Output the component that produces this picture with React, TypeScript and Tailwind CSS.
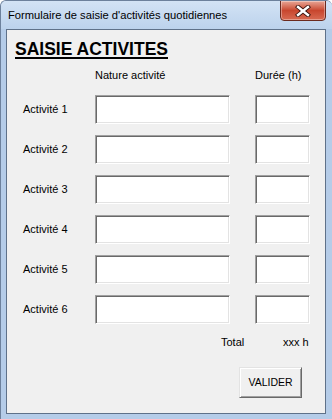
import React from "react";

const font = { fontFamily: '"Liberation Sans", Arial, sans-serif' };

function Sunken({ w }: { w: string }) {
  return (
    <div
      className={`${w} h-[29px] bg-white border border-t-[#a0a0a0] border-l-[#a0a0a0] border-b-[#ffffff] border-r-[#ffffff] shadow-[inset_1px_1px_0_#696969,inset_-1px_-1px_0_#e3e3e3]`}
    />
  );
}

export default function App() {
  const rows = [1, 2, 3, 4, 5, 6];
  return (
    <div
      className="w-[332px] h-[419px] overflow-hidden bg-[#b5cce8] flex flex-col rounded-t-[6px] border border-[#6d819c] border-b-0 border-r-0 text-black"
      style={font}
    >
      <div className="h-[28px] shrink-0 flex items-start bg-gradient-to-b from-[#d3e3f5] to-[#bcd2ec] relative">
        <div className="pl-[7px] pt-[7px] text-[11.2px] leading-[15px] text-black">
          Formulaire de saisie d'activités quotidiennes
        </div>
        <div className="absolute left-[279px] top-[-1px] w-[46px] h-[21px] rounded-b-[4px] border border-[#6b2a1f] bg-gradient-to-b from-[#e7a595] via-[#c8462e] to-[#d86a52] flex items-center justify-center shadow-[inset_0_0_0_1px_rgba(255,255,255,0.35)]">
          <svg width="16" height="12" viewBox="0 0 16 12">
            <path d="M3 2 L13 10 M13 2 L3 10" stroke="#3a1410" strokeWidth="4.2" strokeLinecap="square" />
            <path d="M3 2 L13 10 M13 2 L3 10" stroke="#ffffff" strokeWidth="2.4" strokeLinecap="square" />
          </svg>
        </div>
      </div>
      <div className="ml-[5px] mr-[6px] mb-[5px] flex-1 border border-[#5f7189] bg-[#f0f0f0] flex flex-col">
        <div className="pl-[8px] pt-[8px] h-[28px]">
          <span className="text-[17.5px] leading-[20px] font-bold underline decoration-2 underline-offset-[2px]">
            SAISIE ACTIVITES
          </span>
        </div>
        <div className="mt-[9px] h-[16px] flex items-center text-[11px]">
          <span className="ml-[88px] w-[160px]">Nature activité</span>
          <span>Durée (h)</span>
        </div>
        <div className="mt-[12px] flex flex-col gap-[11px]">
          {rows.map((n) => (
            <div key={n} className="flex items-center h-[29px]">
              <span className="w-[88px] pl-[16px] text-[11px]">Activité {n}</span>
              <Sunken w="w-[135px]" />
              <div className="ml-[25px]">
                <Sunken w="w-[55px]" />
              </div>
            </div>
          ))}
        </div>
        <div className="mt-[10px] h-[16px] flex items-center text-[11px]">
          <span className="ml-[214px] w-[62px]">Total</span>
          <span>xxx h</span>
        </div>
        <div className="mt-[17px] ml-[232px]">
          <div className="w-[63px] h-[31px] flex items-center justify-center text-[10.5px] border border-t-[#e3e3e3] border-l-[#e3e3e3] border-b-[#696969] border-r-[#696969] shadow-[inset_1px_1px_0_#ffffff,inset_-1px_-1px_0_#a0a0a0] bg-[#f0f0f0]">
            VALIDER
          </div>
        </div>
      </div>
    </div>
  );
}
